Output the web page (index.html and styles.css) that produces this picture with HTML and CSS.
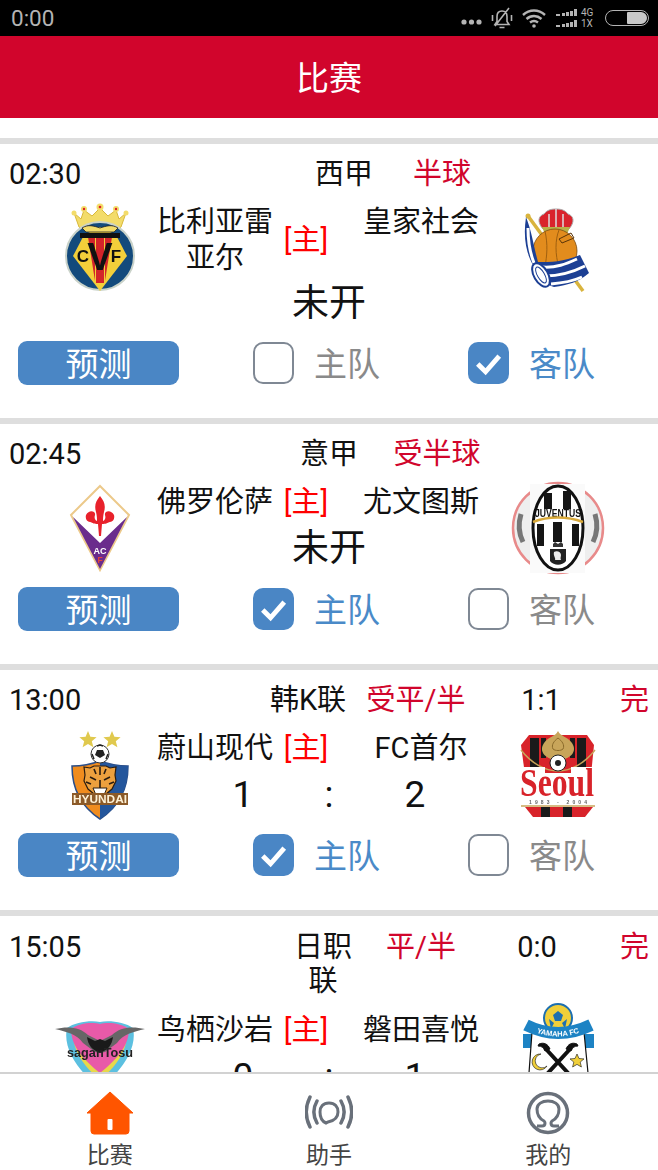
FILE: index.html
```html
<!DOCTYPE html>
<html lang="zh">
<head>
<meta charset="utf-8">
<title>比赛</title>
<link rel="stylesheet" href="styles.css">
</head>
<body>
<div class="app">
  <div class="status">
    <span class="clock">0:00</span>
    <div class="status-icons">
      <svg class="st-dots" viewBox="0 0 21 6" width="21" height="6"><circle cx="3" cy="3" r="2.6"/><circle cx="10.5" cy="3" r="2.6"/><circle cx="18" cy="3" r="2.6"/></svg>
      <svg viewBox="0 0 22 24" width="22" height="24" class="st-line"><path d="M11 5c-3.500 0-5 2.500-5 5.500v5L4 18.500h14l-2-3v-5C16 7.500 14.500 5 11 5zM8.500 21.500h5M1.500 9v6M20.500 9v6M4 20 18 2"/></svg>
      <svg viewBox="0 0 24 20" width="24" height="20" class="st-line wifi"><path d="M1 7c6.500-6 15.500-6 22 0M4.500 11c4.500-4 10.500-4 15 0M8 14.500c2.500-2 5.500-2 8 0"/><circle cx="12" cy="18" r="1.800" class="st-fill"/></svg>
      <div class="signal">
        <svg viewBox="0 0 23 20" width="23" height="20" class="st-bars"><path d="M0 6h4v2H0zM6 5h3v3H6zM10 4h3v4h-3zM14 3h3v5h-3zM18 1h3v7h-3zM0 17h4v2H0zM6 16h3v3H6zM10 15h3v4h-3zM14 14h3v5h-3zM18 12h3v7h-3z"/></svg>
        <div class="net"><span>4G</span><span>1X</span></div>
      </div>
      <div class="battery"><i></i></div>
    </div>
  </div>
  <header class="title">比赛</header>
  <main class="list">

    <section class="match wrapped">
      <div class="meta meta-a">
        <span class="time">02:30</span><span class="league">西甲</span><span class="odds">半球</span>
      </div>
      <div class="teams">
        <svg class="logo logo-l" viewBox="0 0 100 95">
          <path d="M24 9l7 6 3-9 8 6 8-8 8 8 8-6 3 9 7-6-5 14-7 6H36l-7-6z" fill="#f3dc6a" stroke="#d8b83a"/>
          <circle cx="24" cy="9" r="2.500" fill="#f3dc6a"/><circle cx="34" cy="5" r="3" fill="#f3dc6a"/><circle cx="50" cy="3" r="3.500" fill="#f3dc6a"/><circle cx="66" cy="5" r="3" fill="#f3dc6a"/><circle cx="76" cy="9" r="2.500" fill="#f3dc6a"/>
          <circle cx="34" cy="5" r="1.200" fill="#d22"/><circle cx="50" cy="3" r="1.300" fill="#d22"/><circle cx="66" cy="5" r="1.200" fill="#d22"/>
          <circle cx="50" cy="52" r="34" fill="#134a7c" stroke="#c9d2c9" stroke-width="2"/>
          <path d="M50 87 23 52 34 31 50 23 66 31 77 52z" fill="#f3cf3a"/>
          <path d="M38 33h7v44zM62 33h-7v44zM46 33h8v46h-8z" fill="#d3242a"/>
          <path d="M30 29h40v5H30z" fill="#111"/>
          <path d="M32 24c6-4 12-2 18 0 6-2 12-4 18 0l-4 4H36z" fill="#f3dc6a" stroke="#222" stroke-width=".8"/>
          <text x="33" y="58" class="lg-b" font-size="17" fill="#111" text-anchor="middle">C</text>
          <text x="50" y="66" class="lg-b" font-size="38" fill="#111" text-anchor="middle">V</text>
          <text x="66" y="58" class="lg-b" font-size="17" fill="#111" text-anchor="middle">F</text>
        </svg>
        <div class="name">比利亚雷亚尔</div>
        <div class="home">[主]</div>
        <div class="name">皇家社会</div>
        <svg class="logo logo-r" viewBox="0 0 100 95">
          <path d="M21 12 76 87" stroke="#d9b43e" stroke-width="3.500"/>
          <circle cx="21" cy="12" r="2.500" fill="#d9b43e"/>
          <path d="M36 25c-6-7-5-13 1-15 3-4 7-5 12-5s9 1 12 5c6 2 7 8 1 15z" fill="#d9232c" stroke="#aaa"/>
          <path d="M42 10v14M49 5v19M56 10v14" stroke="#ddd" stroke-width="1.500"/>
          <path d="M35 23h28l-3 7H38z" fill="#b9b048"/>
          <circle cx="48" cy="47" r="22" fill="#e28c1d" stroke="#7a4a10" stroke-width=".8"/>
          <path d="M38 27c3 14 2 24 0 36M52 26c-4 10-4 24 0 38" stroke="#a0600f" fill="none"/>
          <path d="M52 35l12-6 3 5-12 5z" fill="none" stroke="#5a3408"/>
          <path d="M19 13c-3 20 0 36 7 48 6 12 13 20 21 22 14-2 25-5 35-14l-9-18C56 58 44 58 31 58c-4-14-6-30-12-45z" fill="#1c3f94"/>
          <path d="M21 24c0 14 2 25 6 35M35 63c14 1 24-3 35-8M38 72c14 0 26-3 40-10M44 80c12-1 22-3 31-7" stroke="#fff" stroke-width="3" fill="none"/>
          <ellipse cx="34" cy="71" rx="7" ry="13" transform="rotate(-30 34 71)" fill="#fff" stroke="#1c3f94" stroke-width="2"/>
          <ellipse cx="34" cy="71" rx="3.500" ry="9" transform="rotate(-30 34 71)" fill="none" stroke="#1c3f94"/>
        </svg>
        <div class="result pending">未开</div>
      </div>
      <div class="actions">
        <button class="predict">预测</button>
        <div class="option"><span class="box"></span><span class="opt-label">主队</span></div>
        <div class="option on"><span class="box"><svg viewBox="0 0 42 42"><path d="M10 22l8 8 14-16"/></svg></span><span class="opt-label">客队</span></div>
      </div>
    </section>

    <section class="match">
      <div class="meta meta-b">
        <span class="time">02:45</span><span class="league">意甲</span><span class="odds">受半球</span>
      </div>
      <div class="teams">
        <svg class="logo logo-l" viewBox="0 0 100 95">
          <path d="M50 2 79 31 50 86 21 31z" fill="#fff" stroke="#ecc98a" stroke-width="2"/>
          <path d="M23 33 50 59 77 33 50 85z" fill="#6a2c8c"/>
          <path d="M50 12c-4 5-6 9-4 16 1 4 1 7 1 9-2-1-3-3-2-6 1-4-6-6-9 0-1 4 1 7 4 7 3 1 4 2 8 2l1 12 2 0 1-12c4 0 5-1 8-2 3 0 5-3 4-7-3-6-10-4-9 0 1 3 0 5-2 6 0-2 0-5 1-9 2-7 0-11-4-16z" fill="#e8212b"/>
          <text x="50" y="70" class="lg-b" font-size="9" fill="#fff" text-anchor="middle">AC</text>
          <text x="50" y="79" class="lg-b" font-size="8.500" fill="#e8413b" text-anchor="middle">F</text>
        </svg>
        <div class="name">佛罗伦萨</div>
        <div class="home">[主]</div>
        <div class="name">尤文图斯</div>
        <svg class="logo logo-r" viewBox="0 0 100 95">
          <circle cx="51" cy="44" r="45" fill="#eee" stroke="#e88a8a" stroke-width="2.500"/>
          <path d="M14 30c-3 10-2 20 2 28M88 30c3 10 2 20-2 28" stroke="#777" stroke-width="5" fill="none"/>
          <rect x="23" y="0" width="55" height="89" fill="#fafafa"/>
          <ellipse cx="51" cy="44" rx="25" ry="42" fill="#fff" stroke="#111" stroke-width="3"/>
          <path d="M37 9h8v16h-8zM56 7h8v18h-8zM30 40h7v22h-7zM46 38h9v20h-9zM65 40h7v22h-7z" fill="#151515"/>
          <text x="51" y="33" class="lg-b" font-size="10" fill="#111" text-anchor="middle" textLength="46" lengthAdjust="spacingAndGlyphs">JUVENTUS</text>
          <path d="M26 38c15-6 34-6 50 0" stroke="#d8a93a" stroke-width="2.500" fill="none"/>
          <path d="M46 60l2-2 3 2 3-2 2 2v3H46z" fill="#333"/>
          <path d="M43 65h16v12c-4 5-12 5-16 0z" fill="#222"/>
          <path d="M47 68c3-2 7 0 7 3 0 2-1 3 0 5h-6c1-2-2-4-1-8z" fill="#eee"/>
        </svg>
        <div class="result pending">未开</div>
      </div>
      <div class="actions">
        <button class="predict">预测</button>
        <div class="option on"><span class="box"><svg viewBox="0 0 42 42"><path d="M10 22l8 8 14-16"/></svg></span><span class="opt-label">主队</span></div>
        <div class="option"><span class="box"></span><span class="opt-label">客队</span></div>
      </div>
    </section>

    <section class="match">
      <div class="meta meta-c">
        <span class="time">13:00</span><span class="league">韩K联</span><span class="odds">受平/半</span><span class="half">1:1</span><span class="state">完</span>
      </div>
      <div class="teams">
        <svg class="logo logo-l" viewBox="0 0 100 95">
          <path d="M38 1l2.400 5.800 6.200.4-4.800 4 1.600 6L38 14l-5.400 3.200 1.600-6-4.800-4 6.200-.4zM62 1l2.400 5.800 6.200.4-4.800 4 1.600 6L62 14l-5.400 3.200 1.600-6-4.800-4 6.200-.4z" fill="#e0c94e"/>
          <path d="M22 36c10 0 20-2 28-5 8 3 18 5 28 5 0 22-8 40-28 53-20-13-28-31-28-53z" fill="#f08c1e" stroke="#2b4e88" stroke-width="1.500"/>
          <path d="M50 31c8 3 18 5 28 5 0 22-8 40-28 53z" fill="#24569c"/>
          <circle cx="50" cy="24" r="9" fill="#fff" stroke="#333"/>
          <path d="M47 20h6l2 5-5 3-5-3z" fill="#222"/>
          <path d="M42 24l2 5M58 24l-2 5M47 16l3-1 3 1" stroke="#222" stroke-width="1.500" fill="none"/>
          <path d="M34 37l6 1 4-2h12l4 2 6-1-1 8 1 6-4 8-6 5-6 3-6-3-6-5-4-8 1-6z" fill="#eca03e" stroke="#2a1c10" stroke-width="1.200"/>
          <path d="M40 47l6 3M60 47l-6 3M50 50v9M44 39l2 5M56 39l-2 5M50 37v8M36 52l5 2M64 52l-5 2" stroke="#2a1c10" stroke-width="1.600"/>
          <path d="M43 58h14l-3 7h-8z" fill="#fff" stroke="#2a1c10"/>
          <rect x="22" y="63" width="56" height="12" fill="#8c5a28"/>
          <text x="50" y="73" class="lg-b hy" font-size="11.500" fill="#fff3d8" text-anchor="middle" textLength="54" lengthAdjust="spacingAndGlyphs">HYUNDAI</text>
        </svg>
        <div class="name">蔚山现代</div>
        <div class="home">[主]</div>
        <div class="name">FC首尔</div>
        <svg class="logo logo-r" viewBox="0 0 100 95">
          <path d="M22 5h58l7 10-3 30H18L14 15z" fill="#d8232a"/>
          <path d="M23 8h9v36h-9zM70 8h9v36h-9zM34 8h5v20h-5zM63 8h5v20h-5z" fill="#1a1a1a"/>
          <path d="M51 1c3 6 9 5 14 12 6 9-2 16-14 18-12-2-20-9-14-18 5-7 11-6 14-12z" fill="#c8a55a"/>
          <path d="M51 8c4 3 7 7 5 11-2 2-8 2-10 0-2-4 1-8 5-11z" fill="none" stroke="#8a6a2a"/>
          <path d="M14 20c10 13 24 21 37 21s27-8 37-21" stroke="#c8a55a" stroke-width="1.500" fill="none"/>
          <rect x="14" y="37" width="24" height="6" fill="#fff"/><rect x="64" y="37" width="24" height="6" fill="#fff"/>
          <circle cx="51" cy="33" r="8" fill="#fff" stroke="#222"/><circle cx="51" cy="33" r="3" fill="#222"/>
          <rect x="14" y="43" width="73" height="26" fill="#fff"/>
          <text class="seoul" transform="translate(50 66) scale(1 1.300)" font-size="30" fill="#d8232a" text-anchor="middle" textLength="74" lengthAdjust="spacingAndGlyphs">Seoul</text>
          <text x="51" y="74" class="lg-b" font-size="5" fill="#666" text-anchor="middle" textLength="58">1983 · 2004</text>
          <path d="M18 77h68l-8 10H26z" fill="#d8232a"/>
          <path d="M34 77h9v10h-9zM56 77h9v10h-9z" fill="#1a1a1a"/>
          <path d="M14 76h74" stroke="#c8a55a" stroke-width="1.500"/>
        </svg>
        <div class="result score"><span>1</span><span>:</span><span>2</span></div>
      </div>
      <div class="actions">
        <button class="predict">预测</button>
        <div class="option on"><span class="box"><svg viewBox="0 0 42 42"><path d="M10 22l8 8 14-16"/></svg></span><span class="opt-label">主队</span></div>
        <div class="option"><span class="box"></span><span class="opt-label">客队</span></div>
      </div>
    </section>

    <section class="match">
      <div class="meta meta-d">
        <span class="time">15:05</span><span class="league">日职联</span><span class="odds">平/半</span><span class="half">0:0</span><span class="state">完</span>
      </div>
      <div class="teams">
        <svg class="logo logo-l" viewBox="0 0 100 95">
          <path d="M17 16c-5 22 14 46 33 60 19-14 38-38 33-60-8-6-24-8-33-6-9-2-25 0-33 6z" fill="#5cc0e0"/>
          <path d="M24 30c2 14 14 28 26 38 12-10 24-24 26-38" fill="#e8d84a"/>
          <path d="M21 17c0 18 14 32 29 44 15-12 29-26 29-44-8-6-21-7-29-5-8-2-21-1-29 5z" fill="#e85aa8"/>
          <path d="M5 17c13-3 25-2 33 6l12 6 12-6c8-8 20-9 33-6-12 3-22 5-28 14l-12 9-5 1-5-1-12-9C27 22 17 20 5 17z" fill="#666"/>
          <path d="M37 25l8 4 5-2 5 2 8-4c-1 8-5 13-13 16-8-3-12-8-13-16z" fill="#1a1a1a"/>
          <text x="50" y="45" class="lg-b" font-size="13" fill="#222" text-anchor="middle" textLength="66" lengthAdjust="spacingAndGlyphs">saganTosu</text>
        </svg>
        <div class="name">鸟栖沙岩</div>
        <div class="home">[主]</div>
        <div class="name">磐田喜悦</div>
        <svg class="logo logo-r" viewBox="0 0 100 95">
          <path id="yamaha-arc" d="M21 17Q51 32 81 17" fill="none"/>
          <circle cx="51" cy="6" r="14" fill="#f0cf3a" stroke="#1d6fb0" stroke-width="2"/>
          <path d="M51 -1l5 4-2 6h-6l-2-6zM42 7l5 4-3 6M60 7l-5 4 3 6" fill="#1d6fb0"/>
          <path d="M16 22h9v14h-9zM78 22h9v14h-9z" fill="#1d83c4"/>
          <path d="M25 20h52l4 41H22z" fill="#fff" stroke="#111" stroke-width="1.200"/>
          <path d="M19 13Q51 29 84 13" fill="none" stroke="#1d83c4" stroke-width="12"/>
          <text class="lg-b" font-size="7.500" fill="#fff"><textPath href="#yamaha-arc" startOffset="50%" text-anchor="middle">YAMAHA FC</textPath></text>
          <path d="M38 36 62 62M64 36 40 62" stroke="#111" stroke-width="4"/>
          <path d="M32 32c5-2 9 0 11 5l-5 2c-1-3-3-5-7-5zM70 32c-5-2-9 0-11 5l5 2c1-3 3-5 7-5z" fill="#111" stroke="#111"/>
          <path d="M34 42a8 8 0 1 0 6 12 7 7 0 1 1-6-12z" fill="#f0cf3a" stroke="#111" stroke-width=".6"/>
          <path d="M70 42l2 4.500 5 .4-3.800 3.200 1.200 4.900-4.400-2.600-4.400 2.600 1.200-4.900-3.800-3.200 5-.4z" fill="#f0cf3a" stroke="#111" stroke-width=".6"/>
        </svg>
        <div class="result score"><span>0</span><span>:</span><span>1</span></div>
      </div>
    </section>

  </main>
  <nav class="tabs">
    <div class="tab active">
      <svg viewBox="0 0 48 44" width="48" height="44"><path d="M24 1 47 22h-4v18a3 3 0 0 1-3 3H8a3 3 0 0 1-3-3V22H1z" fill="#ff5500" stroke="#ff5500" stroke-linejoin="round"/><rect x="21.500" y="28" width="5" height="11" rx="1" fill="#fff"/></svg>
      <span>比赛</span>
    </div>
    <div class="tab">
      <svg viewBox="0 0 48 44" width="48" height="44" fill="none" stroke="#69707a" stroke-linecap="round"><path stroke-width="3" d="M24 12c6 0 9 4 9 9 0 6-5 9-10 10l-2 1c-5-2-6-7-6-11 0-5 3-9 9-9z"/><path stroke-width="3.500" d="M12 10c-4 7-4 15 0 22M36 10c4 7 4 15 0 22M5 6c-5 10-5 20 0 30M43 6c5 10 5 20 0 30"/></svg>
      <span>助手</span>
    </div>
    <div class="tab">
      <svg viewBox="0 0 48 44" width="48" height="44" fill="none" stroke="#69707a" stroke-width="3.500"><circle cx="24" cy="22" r="19.500"/><path stroke-width="3" d="M13 35h5q3 0 3-3c0-1 0-1-1-2-4-2-7-6-7-12 0-5 5-8 11-8s11 3 11 8c0 6-3 10-7 12-1 1-1 1-1 2q0 3 3 3h5"/></svg>
      <span>我的</span>
    </div>
  </nav>
</div>
</body>
</html>
```
FILE: styles.css
```css
* { box-sizing: border-box; }
html, body { margin: 0; padding: 0; height: 100%; }
body {
  font-family: Roboto, "Noto Sans CJK SC", sans-serif;
  background: #fff;
  color: #111;
}
.app {
  width: 658px;
  height: 1170px;
  display: flex;
  flex-direction: column;
  overflow: hidden;
}

/* status bar */
.status {
  height: 36px;
  flex: none;
  background: #000;
  display: flex;
  align-items: center;
  justify-content: space-between;
  padding: 0 9px 0 11px;
  color: #b4b4b4;
}
.clock { font-size: 22.500px; }
.status-icons { display: flex; align-items: center; }
.status-icons svg { display: block; }
.st-dots { fill: #b4b4b4; margin: 8px 9px 0 0; }
.st-line { fill: none; stroke: #b4b4b4; stroke-width: 1.600; margin-right: 9px; }
.st-fill { fill: #b4b4b4; stroke: none; }
.wifi { stroke-width: 2.400; }
.signal { display: flex; align-items: center; gap: 2px; margin: 0 8px 0 1px; }
.st-bars { fill: #b4b4b4; }
.net { display: flex; flex-direction: column; font-size: 10px; line-height: 11px; width: 16px; }
.battery {
  width: 44px;
  height: 16px;
  border: 1.500px solid #b4b4b4;
  border-radius: 8px;
  padding: 1px;
  display: flex;
  justify-content: flex-end;
}
.battery i { width: 20px; background: #c8c8c8; border-radius: 1px 6px 6px 1px; }

/* title */
.title {
  height: 82px;
  flex: none;
  background: #d1052c;
  color: #fff;
  font-size: 33px;
  line-height: 85px;
  text-align: center;
}

/* list */
.list {
  flex: 1;
  min-height: 0;
  overflow: hidden;
  padding-top: 20px;
}
.match {
  border-top: 6px solid #dedede;
  padding-bottom: 33px;
  font-size: 29px;
}
.meta {
  display: grid;
  padding: 13px 9px 0;
  line-height: 34px;
  align-items: start;
  text-align: center;
}
.meta span { display: block; height: 34px; white-space: nowrap; }
.meta .league { height: auto; white-space: normal; }
.meta-a { grid-template-columns: 275px 120px 76px; }
.meta-b { grid-template-columns: 270px 100px 116px; }
.meta-c { grid-template-columns: 260px 78px 138px 112px 1fr; }
.meta-d { grid-template-columns: 284px 60px 136px 96px 1fr; padding-top: 14px; padding-bottom: 1px; }
.time { text-align: left; }
.odds { color: #d1052c; }
.state { color: #d1052c; text-align: right; }

.teams {
  display: grid;
  grid-template-columns: 100px 130px 76px 130px 1fr;
  padding: 13px 30px 0 50px;
  align-items: center;
  text-align: center;
}
.name { line-height: 36px; grid-row: 1; align-self: start; }
.home { grid-row: 1; color: #f00; width: 52px; line-height: 36px; text-align: center; white-space: nowrap; }
.logo { grid-row: 1 / span 2; align-self: start; width: 100px; height: 95px; margin-bottom: -10px; overflow: visible; display: block; filter: blur(0.35px); }
.logo-l { grid-column: 1; }
.logo-r { grid-column: 5; justify-self: center; }
.lg-b { font-family: "Liberation Sans", sans-serif; font-weight: 700; }
.seoul { font-family: "Liberation Serif", serif; font-weight: 700; }
.result {
  grid-column: 2 / span 3;
  grid-row: 2;
  height: 55px;
  font-size: 37px;
  line-height: 57px;
  padding-left: 22px;
}
.wrapped .result { height: 53px; line-height: 55px; }
.score { display: flex; justify-content: center; }
.score span { width: 86px; text-align: center; }

/* actions */
.actions {
  display: flex;
  align-items: center;
  height: 56px;
  padding: 12px 0 0 18px;
}
.predict {
  flex: none;
  width: 161px;
  height: 44px;
  margin: 0 74px 0 0;
  padding: 4px 0 0;
  border: 0;
  border-radius: 9px;
  background: #4a86c5;
  color: #fff;
  font: inherit;
  font-size: 33px;
  line-height: 40px;
}
.option { display: flex; align-items: center; gap: 20px; width: 215px; flex: none; }
.box {
  width: 41px;
  height: 42px;
  flex: none;
  border: 2px solid #7f8894;
  border-radius: 10px;
  background: #fff;
}
.box svg { display: block; width: 100%; height: 100%; fill: none; stroke: #fff; stroke-width: 5; }
.opt-label { font-size: 33px; padding-top: 3px; line-height: 41px; color: #8a8a8a; }
.on .box { border: 0; background: #4a86c5; }
.on .opt-label { color: #4a8ac8; }

/* tabs */
.tabs {
  height: 98px;
  flex: none;
  background: #fff;
  border-top: 2px solid #d2d2d2;
  display: grid;
  grid-template-columns: repeat(3, 219.330px);
}
.tab {
  display: flex;
  flex-direction: column;
  align-items: center;
  padding-top: 17px;
  color: #444;
  font-size: 23px;
  line-height: 34px;
}
.tab svg { display: block; margin-bottom: 4px; }
```
